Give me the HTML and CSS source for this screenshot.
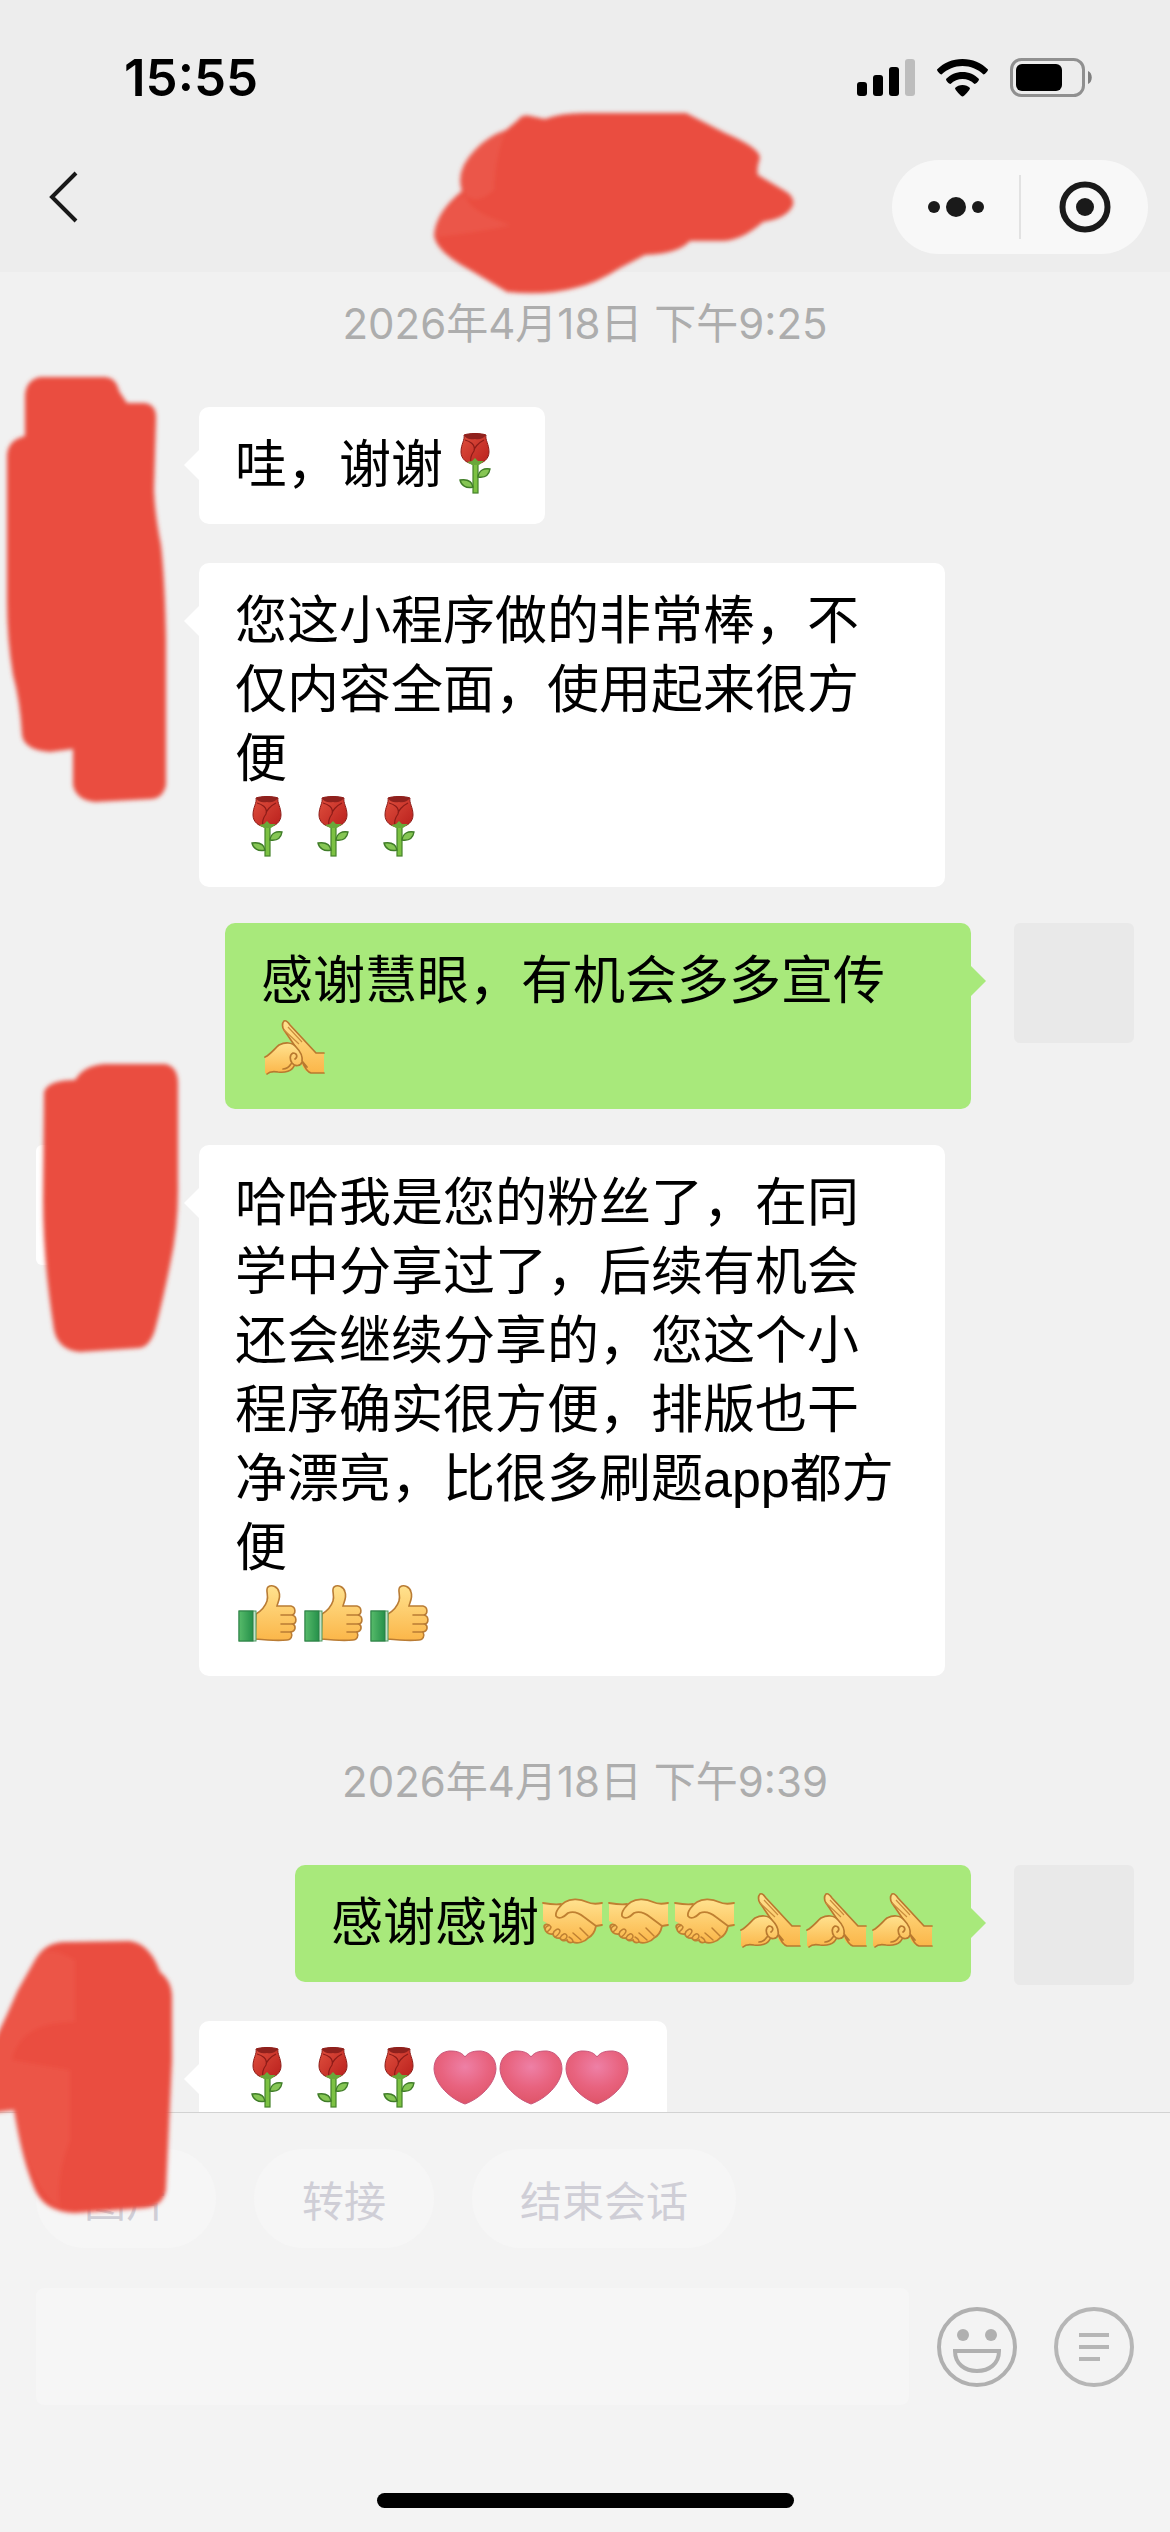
FILE: index.html
```html
<!DOCTYPE html>
<html lang="zh-CN">
<head>
<meta charset="utf-8">
<meta name="viewport" content="width=device-width, initial-scale=1">
<title>客服会话</title>
<link rel="stylesheet" href="styles.css">
</head>
<body>
<svg class="defs" width="0" height="0" aria-hidden="true">
  <defs>
    <linearGradient id="skin" x1="0" y1="0" x2="0" y2="1"><stop offset="0" stop-color="#ffe28f"/><stop offset="1" stop-color="#fbb649"/></linearGradient>
    <linearGradient id="petal" x1="0" y1="0" x2="1" y2="1"><stop offset="0" stop-color="#e0513f"/><stop offset="1" stop-color="#b91f1c"/></linearGradient>
    <linearGradient id="cuff" x1="0" y1="0" x2="1" y2="0"><stop offset="0" stop-color="#57bb6a"/><stop offset="1" stop-color="#25904a"/></linearGradient>
    <radialGradient id="love" cx=".5" cy=".3" r=".7"><stop offset="0" stop-color="#ee80a6"/><stop offset=".55" stop-color="#e8637f"/><stop offset="1" stop-color="#df5468"/></radialGradient>
    <filter id="soft" x="-10%" y="-10%" width="120%" height="120%"><feGaussianBlur stdDeviation="2"/></filter>
    <symbol id="rose" viewBox="0 0 66 66">
      <rect x="30" y="32" width="5" height="30" fill="#7cc142" stroke="#45822a" stroke-width="1.2"/>
      <path d="M35 46C36 39 41 37 47 38C46 44 42 47 35 46Z" fill="#86c654" stroke="#3f7c28" stroke-width="1.4"/>
      <path d="M30 56C23 58 18 54 17 49C24 48 29 50 30 56Z" fill="#86c654" stroke="#3f7c28" stroke-width="1.4"/>
      <path d="M21 4C26 2 38 2 43 4C42 9 46 13 46 21C46 28 40 33 32 33C24 33 18 28 18 21C18 13 22 9 21 4Z" fill="url(#petal)" stroke="#8c1c18" stroke-width="1"/>
      <path d="M21 4C26 2 38 2 43 4C40 8 36 9 32 8C27 9 23 8 21 4Z" fill="#8f211d"/>
      <path d="M22 9C26 10 33 13 31 20C28 24 27 28 28 32M41 9C35 12 31 17 31 20" fill="none" stroke="#8c1c18" stroke-width="1.2"/>
      <path d="M24 31L29 30L32 27L35 30L41 30L36 34L29 34Z" fill="#69a83a"/>
    </symbol>
    <symbol id="thumb" viewBox="0 0 66 66">
      <path d="M21 31C26 28 30 24 32 18C34 12 30 7 33 4C37 1 43 4 44 9C46 14 43 19 42 23H56C61 24 61 31 57 32C62 33 62 40 58 41C61 43 61 48 56 49C58 53 56 57 52 57C42 58 30 57 20 56Z" fill="url(#skin)" stroke="#b97c35" stroke-width="1.6"/>
      <path d="M46 32H57M46 41H58M46 49H56" stroke="#b97c35" stroke-width="1.6" stroke-linecap="round"/>
      <rect x="4" y="28" width="17" height="30" fill="#c4e3cb" stroke="#4d9a5e" stroke-width="1"/>
      <rect x="4" y="28" width="14" height="30" fill="url(#cuff)" stroke="#2b7f45" stroke-width="1"/>
    </symbol>
    <symbol id="shake" viewBox="0 0 66 66">
      <path d="M4 14C10 15 16 16 22 15C29 9 42 10 48 13C52 15 58 15 63 14V36L57 37C56 42 53 47 49 49C46 53 38 55 34 53C29 55 28 51 28 51C24 53 21 50 21 49C17 50 14 47 14 45C9 46 6 42 6 40C4 38 5 35 8 34L4 32Z" fill="url(#skin)"/>
      <path d="M4 14C10 15 16 16 22 15M57 37C56 42 53 47 49 49C46 53 38 55 34 53C29 55 28 51 28 51C24 53 21 50 21 49C17 50 14 47 14 45C9 46 6 42 6 40C4 37 6 34 10 36M57 37L63 36M63 14C58 15 52 15 48 13C40 9 31 10 26 13C21 16 16 23 17 27C20 31 25 28 29 24C34 22 40 24 45 28L57 37" fill="none" stroke="#bf8032" stroke-width="1.8" stroke-linecap="round"/>
      <path d="M6 40C7 37 11 35 12 38C12 40 9 42 8 43M14 45C15 41 20 38 21 42C21 44 18 47 16 48M21 49C23 45 27 43 28 47C28 49 26 51 24 51M30 48C34 50 34 53 34 53M34 44L42 51M41 39L49 47" fill="none" stroke="#bf8032" stroke-width="1.5" stroke-linecap="round"/>
    </symbol>
    <symbol id="salute" viewBox="0 0 66 66">
      <path d="M35 33L22 14C20 9 21 6 24 5C26 5 28 6 29 8L55 37H63V57H50C44 56 41 51 39 43Z" fill="url(#skin)"/>
      <path d="M63 37H55L29 9C27 6 25 4 23 5C21 7 21 11 23 14L36 33M63 57H50C46 56 43 50 41 45L46 51" fill="none" stroke="#b8792f" stroke-width="1.7" stroke-linecap="round"/>
      <path d="M23 14L38 28M27 11L41 26" fill="none" stroke="#c98c3c" stroke-width="1.2"/>
      <path d="M4 41C10 38 14 32 18 29C24 26 31 26 35 31C39 35 42 41 41 46C40 50 36 51 33 50C31 55 24 57 17 56C12 55 8 56 6 58L4 57Z" fill="url(#skin)"/>
      <path d="M4 41C10 38 14 32 18 29C24 26 31 26 35 31C39 35 42 41 41 46C40 50 34 51 31 47C29 44 28 39 32 37C36 37 37 41 34 43M33 50C31 55 24 57 17 56C12 55 8 56 6 58M30 48C28 51 25 53 22 53" fill="none" stroke="#b8792f" stroke-width="1.7" stroke-linecap="round"/>
    </symbol>
    <symbol id="heart" viewBox="0 0 66 66">
      <path d="M32 12C36 6 43 6 48 6C57 7 63 14 63 24C62 40 46 54 32 59C18 54 2 40 1 24C1 14 7 7 16 6C21 6 28 6 32 12Z" fill="url(#love)" stroke="#c9587c" stroke-width="1"/>
    </symbol>
  </defs>
</svg>

<div class="screen">
  <header class="header">
    <div class="status">
      <time class="clock">15:55</time>
      <div class="status-icons">
        <svg width="58" height="38" viewBox="0 0 58 38" aria-label="信号"><rect y="23" width="10" height="14" rx="3"/><rect x="16" y="16" width="10" height="21" rx="3"/><rect x="32" y="8" width="10" height="29" rx="3"/><rect x="48" width="10" height="37" rx="3" fill="#bdbdbd"/></svg>
        <svg width="51" height="38" viewBox="0 0 51 38" aria-label="无线网络"><path d="M25.500 0C35.500 0 44.500 4 51 10.500C51 12 48 15.500 46.500 15.500C40.500 10 33.500 7 25.500 7S10.500 10 4.500 15.500C3 15.500 0 12 0 10.500C6.500 4 15.500 0 25.500 0Z"/><path d="M25.500 13C32 13 37.500 15.500 42 20C42 22 39 25 37.500 25C34 21.500 30 20 25.500 20S17 21.500 13.500 25C12 25 9 22 9 20C13.500 15.500 19 13 25.500 13Z"/><path d="M25.500 26C28.500 26 31 27 33 29C33 31 27 37.500 25.500 37.500S18 31 18 29C20 27 22.500 26 25.500 26Z"/></svg>
        <svg width="82" height="40" viewBox="0 0 82 40" aria-label="电池"><rect x="1.500" y="1.500" width="72" height="36" rx="10" fill="none" stroke="#909090" stroke-width="3"/><rect x="6" y="6" width="46" height="27" rx="6"/><path d="M78 13C83 15 83 24 78 26Z" fill="#808080"/></svg>
      </div>
    </div>
    <nav class="nav">
      <button class="back" type="button" aria-label="返回"><svg width="30" height="52" viewBox="0 0 30 52"><path d="M27 2L3 26L27 50" fill="none" stroke="#191919" stroke-width="4"/></svg></button>
      <div class="capsule">
        <button type="button" aria-label="更多"><svg width="56" height="22" viewBox="0 0 56 22"><circle cx="6" cy="11" r="6"/><circle cx="28" cy="11" r="10"/><circle cx="50" cy="11" r="6"/></svg></button>
        <span class="divider"></span>
        <button type="button" aria-label="关闭"><svg width="52" height="52" viewBox="0 0 52 52"><circle cx="26" cy="26" r="22.500" fill="none" stroke="#1a1a1a" stroke-width="6"/><circle cx="26" cy="26" r="9"/></svg></button>
      </div>
    </nav>
  </header>

  <main class="chat">
    <time class="stamp">2026年4月18日 下午9:25</time>
    <article class="message">
      <div class="avatar blank"></div>
      <p class="bubble">哇，谢谢<svg class="emoji"><use href="#rose"/></svg></p>
    </article>
    <article class="message">
      <div class="avatar blank"></div>
      <p class="bubble">您这小程序做的非常棒，不仅内容全面，使用起来很方便<br><svg class="emoji"><use href="#rose"/></svg><svg class="emoji"><use href="#rose"/></svg><svg class="emoji"><use href="#rose"/></svg></p>
    </article>
    <article class="message mine">
      <div class="avatar"></div>
      <p class="bubble">感谢慧眼，有机会多多宣传<svg class="emoji"><use href="#salute"/></svg></p>
    </article>
    <article class="message">
      <div class="avatar white"></div>
      <p class="bubble">哈哈我是您的粉丝了，在同学中分享过了，后续有机会还会继续分享的，您这个小程序确实很方便，排版也干净漂亮，比很多刷题app都方便<br><svg class="emoji"><use href="#thumb"/></svg><svg class="emoji"><use href="#thumb"/></svg><svg class="emoji"><use href="#thumb"/></svg></p>
    </article>
    <time class="stamp">2026年4月18日 下午9:39</time>
    <article class="message mine">
      <div class="avatar"></div>
      <p class="bubble">感谢感谢<svg class="emoji"><use href="#shake"/></svg><svg class="emoji"><use href="#shake"/></svg><svg class="emoji"><use href="#shake"/></svg><svg class="emoji"><use href="#salute"/></svg><svg class="emoji"><use href="#salute"/></svg><svg class="emoji"><use href="#salute"/></svg></p>
    </article>
    <article class="message">
      <div class="avatar blank"></div>
      <p class="bubble"><svg class="emoji"><use href="#rose"/></svg><svg class="emoji"><use href="#rose"/></svg><svg class="emoji"><use href="#rose"/></svg><svg class="emoji"><use href="#heart"/></svg><svg class="emoji"><use href="#heart"/></svg><svg class="emoji"><use href="#heart"/></svg></p>
    </article>
  </main>

  <footer class="footer">
    <div class="actions">
      <button type="button">图片</button>
      <button type="button">转接</button>
      <button type="button">结束会话</button>
    </div>
    <form class="composer">
      <input type="text" aria-label="输入消息">
      <div class="tools">
        <button type="button" aria-label="表情"><svg width="80" height="80" viewBox="0 0 80 80" fill="none" stroke="#b0b0b0" stroke-width="4"><circle cx="40" cy="40" r="38"/><circle cx="26" cy="28" r="6" fill="#b0b0b0" stroke="none"/><circle cx="54" cy="28" r="6" fill="#b0b0b0" stroke="none"/><path d="M18 44H62C62 57 52 64 40 64S18 57 18 44Z"/></svg></button>
        <button type="button" aria-label="快捷回复"><svg width="80" height="80" viewBox="0 0 80 80" fill="none" stroke="#b6b6b6" stroke-width="4"><circle cx="40" cy="40" r="38"/><path d="M25 28H55M25 40H55M25 52H46"/></svg></button>
      </div>
    </form>
    <div class="home"></div>
  </footer>

  <svg class="mark mark-title" viewBox="420 100 390 205" aria-hidden="true"><g filter="url(#soft)">
    <path d="M518 120C524 112 530 117 545 119Q560 113 585 113H686L725 133Q760 148 760 158Q756 170 758 175L785 191Q795 197 793 205Q788 218 763 222Q740 242 720 241H690Q678 254 645 255L620 268Q595 284 575 288Q545 296 507 292L470 270Q436 252 434 235Q436 212 462 191Q455 170 475 150Q488 136 506 130Z" fill="#ea4d3f"/>
    <path d="M506 131Q495 155 494 190Q476 206 465 194Q455 170 475 150Q488 136 506 131ZM464 195Q436 213 436 237Q480 232 512 225Q470 213 464 195Z" fill="#eb6052" opacity=".5"/></g></svg>
  <svg class="mark mark-first" viewBox="0 370 180 440" aria-hidden="true"><g filter="url(#soft)">
    <path d="M25 436V395Q26 380 40 377H104Q116 377 119 391L127 403H145Q157 405 156 420L154 490Q155 515 161 545Q165 580 166 640V785Q163 798 152 799L95 802Q76 800 73 785V749L50 752Q24 750 22 735Q20 700 13 675Q7 640 7 600V455Q8 440 25 436Z" fill="#ea4d3f"/></g></svg>
  <svg class="mark mark-second" viewBox="30 1055 160 305" aria-hidden="true"><g filter="url(#soft)">
    <path d="M44 1092Q48 1080 75 1080Q84 1065 105 1064H165Q177 1066 178 1082V1180Q179 1225 170 1265Q163 1300 155 1330Q150 1346 140 1348L80 1352Q58 1350 54 1330Q43 1260 43 1200Z" fill="#ea4d3f"/></g></svg>
  <svg class="mark mark-third" viewBox="0 1930 185 295" aria-hidden="true"><g filter="url(#soft)">
    <path d="M-10 2050Q5 2020 18 1990L35 1960Q45 1942 65 1942L130 1941Q150 1944 160 1972Q171 1980 172 1995V2060L166 2190Q163 2206 145 2208L75 2213Q45 2212 35 2190Q22 2160 14 2110L-10 2113Z" fill="#ea4d3f"/>
    <path d="M-10 2050Q5 2020 18 1990L35 1960Q45 1942 75 1960V2022Q20 2022 12 2060L70 2070V2140Q55 2180 60 2208Q30 2190 14 2110L-10 2113Z" fill="#f06456" opacity=".35"/></g></svg>
</div>
</body>
</html>
```
FILE: styles.css
```css
* {
  box-sizing: border-box;
}

body {
  margin: 0;
  background: #f1f1f1;
  color: #000;
  font-family: Inter, "Noto Sans CJK SC", sans-serif;
}

button {
  display: flex;
  align-items: center;
  justify-content: center;
  padding: 0;
  border: 0;
  background: none;
  font: inherit;
}

svg {
  display: block;
}

.defs {
  position: absolute;
}

.screen {
  position: relative;
  display: flex;
  flex-direction: column;
  height: 100vh;
  overflow: hidden;
}

/* Status bar and navigation */
.header {
  flex: none;
  background: #ededed;
}

.status {
  display: flex;
  align-items: center;
  justify-content: space-between;
  height: 156px;
  padding: 0 78px 0 124px;
}

.clock {
  font-size: 51px;
  font-weight: 600;
  line-height: 60px;
}

.status-icons {
  display: flex;
  align-items: center;
  gap: 22px;
}

.nav {
  display: flex;
  align-items: flex-start;
  justify-content: space-between;
  padding: 4px 22px 18px 34px;
}

.back {
  width: 60px;
  height: 74px;
}

.capsule {
  display: grid;
  grid-template-columns: 1fr 2px 1fr;
  align-items: center;
  width: 256px;
  height: 94px;
  border-radius: 47px;
  background: #f8f8f8;
  fill: #1a1a1a;
}

.divider {
  height: 64px;
  background: #e2e2e2;
}

/* Conversation */
.chat {
  display: flex;
  flex: 1;
  flex-direction: column;
  gap: 36px;
  min-height: 0;
  padding: 22px 36px 0;
  overflow: hidden;
}

.chat > * {
  flex: none;
}

.stamp {
  margin: 40px 0 17px;
  color: #adadad;
  font-size: 42px;
  line-height: 60px;
  text-align: center;
}

.stamp:first-child {
  margin-top: 0;
}

.message {
  display: flex;
  align-items: flex-start;
  gap: 43px;
}

.mine {
  flex-direction: row-reverse;
}

.avatar {
  flex: none;
  width: 120px;
  height: 120px;
  border-radius: 6px;
  background: #e9e9e9;
}

.avatar.blank {
  background: none;
}

.avatar.white {
  background: #fff;
}

.bubble {
  position: relative;
  max-width: 746px;
  margin: 0;
  padding: 24px 36px;
  border-radius: 10px;
  background: #fff;
  font-family: "Liberation Sans", "Noto Sans CJK SC", sans-serif;
  font-size: 52px;
  line-height: 69px;
}

.bubble::before {
  position: absolute;
  top: 42px;
  left: -15px;
  width: 16px;
  height: 32px;
  background: inherit;
  clip-path: polygon(0 50%, 100% 0, 100% 100%);
  content: "";
}

.mine .bubble {
  background: #a8e97b;
}

.mine .bubble::before {
  right: -15px;
  left: auto;
  clip-path: polygon(100% 50%, 0 0, 0 100%);
}

.emoji {
  display: inline-block;
  width: 66px;
  height: 66px;
  vertical-align: top;
}

/* Input area */
.footer {
  flex: none;
  padding: 36px 36px 24px;
  border-top: 1px solid #d2d2d2;
  background: #f3f3f3;
}

.actions {
  display: flex;
  gap: 38px;
}

.actions button {
  height: 99px;
  padding: 0 48px;
  border-radius: 50px;
  background: #f6f6f6;
  color: #cfced6;
  font-size: 42px;
}

.composer {
  display: flex;
  align-items: center;
  gap: 28px;
  margin: 40px 0 88px;
}

.composer input {
  flex: 1;
  min-width: 0;
  height: 117px;
  padding: 0 24px;
  border: 0;
  border-radius: 8px;
  background: #f6f6f6;
  font: inherit;
  font-size: 52px;
}

.tools {
  display: flex;
  gap: 37px;
}

.home {
  width: 417px;
  height: 15px;
  margin: 0 auto;
  border-radius: 8px;
  background: #000;
}

/* Brush strokes drawn over private details */
.mark {
  position: absolute;
  pointer-events: none;
}

.mark-title {
  top: 100px;
  left: 420px;
  width: 390px;
}

.mark-first {
  top: 370px;
  left: 0;
  width: 180px;
}

.mark-second {
  top: 1055px;
  left: 30px;
  width: 160px;
}

.mark-third {
  top: 1930px;
  left: 0;
  width: 185px;
}
```
